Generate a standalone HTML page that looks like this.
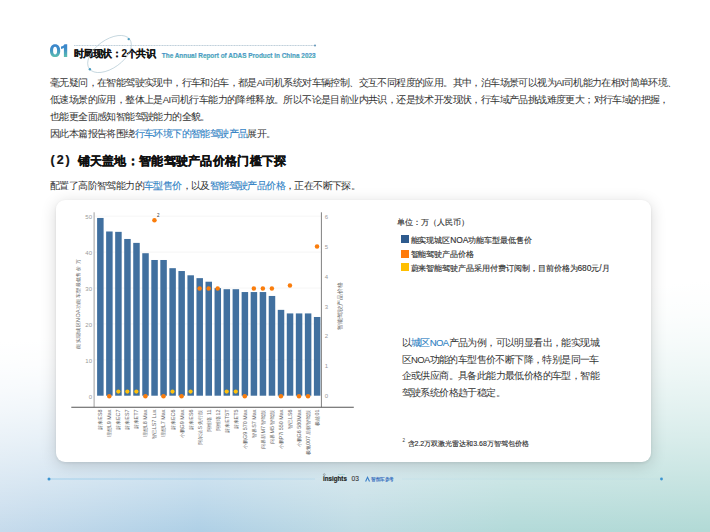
<!DOCTYPE html>
<html><head><meta charset="utf-8">
<style>
*{margin:0;padding:0;box-sizing:border-box}
html,body{width:710px;height:532px;overflow:hidden}
body{position:relative;font-family:"Liberation Sans",sans-serif;color:#333;
background:linear-gradient(to right,#c6dbec 0%,#afd0e6 28%,#bfdbe4 50%,#b3dad9 72%,#b2dad6 100%);}
.abs{position:absolute;white-space:nowrap}
.body{font-size:9.5px;letter-spacing:-0.6px;color:#333;line-height:17px}
.blue{color:#2f7fc4;-webkit-text-stroke-width:0.1px}
#card{position:absolute;left:56px;top:200px;width:595px;height:262px;background:#fff;border-radius:9px;
 box-shadow:0 1px 3px rgba(0,0,0,0.08),0 3px 16px rgba(0,0,0,0.16)}
</style></head><body>

<svg style="position:absolute;left:0;top:0" width="710" height="532"><defs><linearGradient id="w0" x1="0" y1="0" x2="0" y2="1"><stop stop-color="#fff" offset="0" stop-opacity="1"/><stop stop-color="#fff" offset="0.6412" stop-opacity="1.000"/><stop stop-color="#fff" offset="0.6858" stop-opacity="0.956"/><stop stop-color="#fff" offset="0.7305" stop-opacity="0.875"/><stop stop-color="#fff" offset="0.7751" stop-opacity="0.770"/><stop stop-color="#fff" offset="0.8197" stop-opacity="0.646"/><stop stop-color="#fff" offset="0.8643" stop-opacity="0.506"/><stop stop-color="#fff" offset="0.9089" stop-opacity="0.350"/><stop stop-color="#fff" offset="0.9535" stop-opacity="0.182"/><stop stop-color="#fff" offset="0.9981" stop-opacity="0.000"/></linearGradient><linearGradient id="w1" x1="0" y1="0" x2="0" y2="1"><stop stop-color="#fff" offset="0" stop-opacity="1"/><stop stop-color="#fff" offset="0.6380" stop-opacity="1.000"/><stop stop-color="#fff" offset="0.6830" stop-opacity="0.956"/><stop stop-color="#fff" offset="0.7280" stop-opacity="0.875"/><stop stop-color="#fff" offset="0.7730" stop-opacity="0.770"/><stop stop-color="#fff" offset="0.8181" stop-opacity="0.646"/><stop stop-color="#fff" offset="0.8631" stop-opacity="0.506"/><stop stop-color="#fff" offset="0.9081" stop-opacity="0.350"/><stop stop-color="#fff" offset="0.9531" stop-opacity="0.182"/><stop stop-color="#fff" offset="0.9981" stop-opacity="0.000"/></linearGradient><linearGradient id="w2" x1="0" y1="0" x2="0" y2="1"><stop stop-color="#fff" offset="0" stop-opacity="1"/><stop stop-color="#fff" offset="0.6348" stop-opacity="1.000"/><stop stop-color="#fff" offset="0.6802" stop-opacity="0.956"/><stop stop-color="#fff" offset="0.7256" stop-opacity="0.875"/><stop stop-color="#fff" offset="0.7710" stop-opacity="0.770"/><stop stop-color="#fff" offset="0.8164" stop-opacity="0.646"/><stop stop-color="#fff" offset="0.8619" stop-opacity="0.506"/><stop stop-color="#fff" offset="0.9073" stop-opacity="0.350"/><stop stop-color="#fff" offset="0.9527" stop-opacity="0.182"/><stop stop-color="#fff" offset="0.9981" stop-opacity="0.000"/></linearGradient><linearGradient id="w3" x1="0" y1="0" x2="0" y2="1"><stop stop-color="#fff" offset="0" stop-opacity="1"/><stop stop-color="#fff" offset="0.6315" stop-opacity="1.000"/><stop stop-color="#fff" offset="0.6774" stop-opacity="0.956"/><stop stop-color="#fff" offset="0.7232" stop-opacity="0.875"/><stop stop-color="#fff" offset="0.7690" stop-opacity="0.770"/><stop stop-color="#fff" offset="0.8148" stop-opacity="0.646"/><stop stop-color="#fff" offset="0.8606" stop-opacity="0.506"/><stop stop-color="#fff" offset="0.9065" stop-opacity="0.350"/><stop stop-color="#fff" offset="0.9523" stop-opacity="0.182"/><stop stop-color="#fff" offset="0.9981" stop-opacity="0.000"/></linearGradient><linearGradient id="w4" x1="0" y1="0" x2="0" y2="1"><stop stop-color="#fff" offset="0" stop-opacity="1"/><stop stop-color="#fff" offset="0.6283" stop-opacity="1.000"/><stop stop-color="#fff" offset="0.6745" stop-opacity="0.956"/><stop stop-color="#fff" offset="0.7207" stop-opacity="0.875"/><stop stop-color="#fff" offset="0.7670" stop-opacity="0.770"/><stop stop-color="#fff" offset="0.8132" stop-opacity="0.646"/><stop stop-color="#fff" offset="0.8594" stop-opacity="0.506"/><stop stop-color="#fff" offset="0.9057" stop-opacity="0.350"/><stop stop-color="#fff" offset="0.9519" stop-opacity="0.182"/><stop stop-color="#fff" offset="0.9981" stop-opacity="0.000"/></linearGradient><linearGradient id="w5" x1="0" y1="0" x2="0" y2="1"><stop stop-color="#fff" offset="0" stop-opacity="1"/><stop stop-color="#fff" offset="0.6251" stop-opacity="1.000"/><stop stop-color="#fff" offset="0.6717" stop-opacity="0.956"/><stop stop-color="#fff" offset="0.7183" stop-opacity="0.875"/><stop stop-color="#fff" offset="0.7650" stop-opacity="0.770"/><stop stop-color="#fff" offset="0.8116" stop-opacity="0.646"/><stop stop-color="#fff" offset="0.8582" stop-opacity="0.506"/><stop stop-color="#fff" offset="0.9049" stop-opacity="0.350"/><stop stop-color="#fff" offset="0.9515" stop-opacity="0.182"/><stop stop-color="#fff" offset="0.9981" stop-opacity="0.000"/></linearGradient><linearGradient id="w6" x1="0" y1="0" x2="0" y2="1"><stop stop-color="#fff" offset="0" stop-opacity="1"/><stop stop-color="#fff" offset="0.6218" stop-opacity="1.000"/><stop stop-color="#fff" offset="0.6689" stop-opacity="0.956"/><stop stop-color="#fff" offset="0.7159" stop-opacity="0.875"/><stop stop-color="#fff" offset="0.7629" stop-opacity="0.770"/><stop stop-color="#fff" offset="0.8100" stop-opacity="0.646"/><stop stop-color="#fff" offset="0.8570" stop-opacity="0.506"/><stop stop-color="#fff" offset="0.9040" stop-opacity="0.350"/><stop stop-color="#fff" offset="0.9511" stop-opacity="0.182"/><stop stop-color="#fff" offset="0.9981" stop-opacity="0.000"/></linearGradient><linearGradient id="w7" x1="0" y1="0" x2="0" y2="1"><stop stop-color="#fff" offset="0" stop-opacity="1"/><stop stop-color="#fff" offset="0.6186" stop-opacity="1.000"/><stop stop-color="#fff" offset="0.6660" stop-opacity="0.956"/><stop stop-color="#fff" offset="0.7135" stop-opacity="0.875"/><stop stop-color="#fff" offset="0.7609" stop-opacity="0.770"/><stop stop-color="#fff" offset="0.8083" stop-opacity="0.646"/><stop stop-color="#fff" offset="0.8558" stop-opacity="0.506"/><stop stop-color="#fff" offset="0.9032" stop-opacity="0.350"/><stop stop-color="#fff" offset="0.9507" stop-opacity="0.182"/><stop stop-color="#fff" offset="0.9981" stop-opacity="0.000"/></linearGradient><linearGradient id="w8" x1="0" y1="0" x2="0" y2="1"><stop stop-color="#fff" offset="0" stop-opacity="1"/><stop stop-color="#fff" offset="0.6153" stop-opacity="1.000"/><stop stop-color="#fff" offset="0.6632" stop-opacity="0.956"/><stop stop-color="#fff" offset="0.7110" stop-opacity="0.875"/><stop stop-color="#fff" offset="0.7589" stop-opacity="0.770"/><stop stop-color="#fff" offset="0.8067" stop-opacity="0.646"/><stop stop-color="#fff" offset="0.8546" stop-opacity="0.506"/><stop stop-color="#fff" offset="0.9024" stop-opacity="0.350"/><stop stop-color="#fff" offset="0.9503" stop-opacity="0.182"/><stop stop-color="#fff" offset="0.9981" stop-opacity="0.000"/></linearGradient><linearGradient id="w9" x1="0" y1="0" x2="0" y2="1"><stop stop-color="#fff" offset="0" stop-opacity="1"/><stop stop-color="#fff" offset="0.6121" stop-opacity="1.000"/><stop stop-color="#fff" offset="0.6604" stop-opacity="0.956"/><stop stop-color="#fff" offset="0.7086" stop-opacity="0.875"/><stop stop-color="#fff" offset="0.7569" stop-opacity="0.770"/><stop stop-color="#fff" offset="0.8051" stop-opacity="0.646"/><stop stop-color="#fff" offset="0.8534" stop-opacity="0.506"/><stop stop-color="#fff" offset="0.9016" stop-opacity="0.350"/><stop stop-color="#fff" offset="0.9499" stop-opacity="0.182"/><stop stop-color="#fff" offset="0.9981" stop-opacity="0.000"/></linearGradient><linearGradient id="w10" x1="0" y1="0" x2="0" y2="1"><stop stop-color="#fff" offset="0" stop-opacity="1"/><stop stop-color="#fff" offset="0.6089" stop-opacity="1.000"/><stop stop-color="#fff" offset="0.6575" stop-opacity="0.956"/><stop stop-color="#fff" offset="0.7062" stop-opacity="0.875"/><stop stop-color="#fff" offset="0.7548" stop-opacity="0.770"/><stop stop-color="#fff" offset="0.8035" stop-opacity="0.646"/><stop stop-color="#fff" offset="0.8521" stop-opacity="0.506"/><stop stop-color="#fff" offset="0.9008" stop-opacity="0.350"/><stop stop-color="#fff" offset="0.9495" stop-opacity="0.182"/><stop stop-color="#fff" offset="0.9981" stop-opacity="0.000"/></linearGradient><linearGradient id="w11" x1="0" y1="0" x2="0" y2="1"><stop stop-color="#fff" offset="0" stop-opacity="1"/><stop stop-color="#fff" offset="0.6056" stop-opacity="1.000"/><stop stop-color="#fff" offset="0.6547" stop-opacity="0.956"/><stop stop-color="#fff" offset="0.7038" stop-opacity="0.875"/><stop stop-color="#fff" offset="0.7528" stop-opacity="0.770"/><stop stop-color="#fff" offset="0.8019" stop-opacity="0.646"/><stop stop-color="#fff" offset="0.8509" stop-opacity="0.506"/><stop stop-color="#fff" offset="0.9000" stop-opacity="0.350"/><stop stop-color="#fff" offset="0.9491" stop-opacity="0.182"/><stop stop-color="#fff" offset="0.9981" stop-opacity="0.000"/></linearGradient><linearGradient id="w12" x1="0" y1="0" x2="0" y2="1"><stop stop-color="#fff" offset="0" stop-opacity="1"/><stop stop-color="#fff" offset="0.6024" stop-opacity="1.000"/><stop stop-color="#fff" offset="0.6519" stop-opacity="0.956"/><stop stop-color="#fff" offset="0.7013" stop-opacity="0.875"/><stop stop-color="#fff" offset="0.7508" stop-opacity="0.770"/><stop stop-color="#fff" offset="0.8003" stop-opacity="0.646"/><stop stop-color="#fff" offset="0.8497" stop-opacity="0.506"/><stop stop-color="#fff" offset="0.8992" stop-opacity="0.350"/><stop stop-color="#fff" offset="0.9487" stop-opacity="0.182"/><stop stop-color="#fff" offset="0.9981" stop-opacity="0.000"/></linearGradient><linearGradient id="w13" x1="0" y1="0" x2="0" y2="1"><stop stop-color="#fff" offset="0" stop-opacity="1"/><stop stop-color="#fff" offset="0.5992" stop-opacity="1.000"/><stop stop-color="#fff" offset="0.6490" stop-opacity="0.956"/><stop stop-color="#fff" offset="0.6989" stop-opacity="0.875"/><stop stop-color="#fff" offset="0.7488" stop-opacity="0.770"/><stop stop-color="#fff" offset="0.7986" stop-opacity="0.646"/><stop stop-color="#fff" offset="0.8485" stop-opacity="0.506"/><stop stop-color="#fff" offset="0.8984" stop-opacity="0.350"/><stop stop-color="#fff" offset="0.9482" stop-opacity="0.182"/><stop stop-color="#fff" offset="0.9981" stop-opacity="0.000"/></linearGradient><linearGradient id="w14" x1="0" y1="0" x2="0" y2="1"><stop stop-color="#fff" offset="0" stop-opacity="1"/><stop stop-color="#fff" offset="0.5959" stop-opacity="1.000"/><stop stop-color="#fff" offset="0.6462" stop-opacity="0.956"/><stop stop-color="#fff" offset="0.6965" stop-opacity="0.875"/><stop stop-color="#fff" offset="0.7467" stop-opacity="0.770"/><stop stop-color="#fff" offset="0.7970" stop-opacity="0.646"/><stop stop-color="#fff" offset="0.8473" stop-opacity="0.506"/><stop stop-color="#fff" offset="0.8976" stop-opacity="0.350"/><stop stop-color="#fff" offset="0.9478" stop-opacity="0.182"/><stop stop-color="#fff" offset="0.9981" stop-opacity="0.000"/></linearGradient><linearGradient id="w15" x1="0" y1="0" x2="0" y2="1"><stop stop-color="#fff" offset="0" stop-opacity="1"/><stop stop-color="#fff" offset="0.5927" stop-opacity="1.000"/><stop stop-color="#fff" offset="0.6434" stop-opacity="0.956"/><stop stop-color="#fff" offset="0.6940" stop-opacity="0.875"/><stop stop-color="#fff" offset="0.7447" stop-opacity="0.770"/><stop stop-color="#fff" offset="0.7954" stop-opacity="0.646"/><stop stop-color="#fff" offset="0.8461" stop-opacity="0.506"/><stop stop-color="#fff" offset="0.8968" stop-opacity="0.350"/><stop stop-color="#fff" offset="0.9474" stop-opacity="0.182"/><stop stop-color="#fff" offset="0.9981" stop-opacity="0.000"/></linearGradient><linearGradient id="w16" x1="0" y1="0" x2="0" y2="1"><stop stop-color="#fff" offset="0" stop-opacity="1"/><stop stop-color="#fff" offset="0.5894" stop-opacity="1.000"/><stop stop-color="#fff" offset="0.6405" stop-opacity="0.956"/><stop stop-color="#fff" offset="0.6916" stop-opacity="0.875"/><stop stop-color="#fff" offset="0.7427" stop-opacity="0.770"/><stop stop-color="#fff" offset="0.7938" stop-opacity="0.646"/><stop stop-color="#fff" offset="0.8449" stop-opacity="0.506"/><stop stop-color="#fff" offset="0.8960" stop-opacity="0.350"/><stop stop-color="#fff" offset="0.9470" stop-opacity="0.182"/><stop stop-color="#fff" offset="0.9981" stop-opacity="0.000"/></linearGradient><linearGradient id="w17" x1="0" y1="0" x2="0" y2="1"><stop stop-color="#fff" offset="0" stop-opacity="1"/><stop stop-color="#fff" offset="0.5862" stop-opacity="1.000"/><stop stop-color="#fff" offset="0.6377" stop-opacity="0.956"/><stop stop-color="#fff" offset="0.6892" stop-opacity="0.875"/><stop stop-color="#fff" offset="0.7407" stop-opacity="0.770"/><stop stop-color="#fff" offset="0.7922" stop-opacity="0.646"/><stop stop-color="#fff" offset="0.8437" stop-opacity="0.506"/><stop stop-color="#fff" offset="0.8951" stop-opacity="0.350"/><stop stop-color="#fff" offset="0.9466" stop-opacity="0.182"/><stop stop-color="#fff" offset="0.9981" stop-opacity="0.000"/></linearGradient><linearGradient id="w18" x1="0" y1="0" x2="0" y2="1"><stop stop-color="#fff" offset="0" stop-opacity="1"/><stop stop-color="#fff" offset="0.5830" stop-opacity="1.000"/><stop stop-color="#fff" offset="0.6349" stop-opacity="0.956"/><stop stop-color="#fff" offset="0.6868" stop-opacity="0.875"/><stop stop-color="#fff" offset="0.7387" stop-opacity="0.770"/><stop stop-color="#fff" offset="0.7905" stop-opacity="0.646"/><stop stop-color="#fff" offset="0.8424" stop-opacity="0.506"/><stop stop-color="#fff" offset="0.8943" stop-opacity="0.350"/><stop stop-color="#fff" offset="0.9462" stop-opacity="0.182"/><stop stop-color="#fff" offset="0.9981" stop-opacity="0.000"/></linearGradient><linearGradient id="w19" x1="0" y1="0" x2="0" y2="1"><stop stop-color="#fff" offset="0" stop-opacity="1"/><stop stop-color="#fff" offset="0.5797" stop-opacity="1.000"/><stop stop-color="#fff" offset="0.6320" stop-opacity="0.956"/><stop stop-color="#fff" offset="0.6843" stop-opacity="0.875"/><stop stop-color="#fff" offset="0.7366" stop-opacity="0.770"/><stop stop-color="#fff" offset="0.7889" stop-opacity="0.646"/><stop stop-color="#fff" offset="0.8412" stop-opacity="0.506"/><stop stop-color="#fff" offset="0.8935" stop-opacity="0.350"/><stop stop-color="#fff" offset="0.9458" stop-opacity="0.182"/><stop stop-color="#fff" offset="0.9981" stop-opacity="0.000"/></linearGradient><linearGradient id="w20" x1="0" y1="0" x2="0" y2="1"><stop stop-color="#fff" offset="0" stop-opacity="1"/><stop stop-color="#fff" offset="0.5765" stop-opacity="1.000"/><stop stop-color="#fff" offset="0.6292" stop-opacity="0.956"/><stop stop-color="#fff" offset="0.6819" stop-opacity="0.875"/><stop stop-color="#fff" offset="0.7346" stop-opacity="0.770"/><stop stop-color="#fff" offset="0.7873" stop-opacity="0.646"/><stop stop-color="#fff" offset="0.8400" stop-opacity="0.506"/><stop stop-color="#fff" offset="0.8927" stop-opacity="0.350"/><stop stop-color="#fff" offset="0.9454" stop-opacity="0.182"/><stop stop-color="#fff" offset="0.9981" stop-opacity="0.000"/></linearGradient><linearGradient id="w21" x1="0" y1="0" x2="0" y2="1"><stop stop-color="#fff" offset="0" stop-opacity="1"/><stop stop-color="#fff" offset="0.5733" stop-opacity="1.000"/><stop stop-color="#fff" offset="0.6264" stop-opacity="0.956"/><stop stop-color="#fff" offset="0.6795" stop-opacity="0.875"/><stop stop-color="#fff" offset="0.7326" stop-opacity="0.770"/><stop stop-color="#fff" offset="0.7857" stop-opacity="0.646"/><stop stop-color="#fff" offset="0.8388" stop-opacity="0.506"/><stop stop-color="#fff" offset="0.8919" stop-opacity="0.350"/><stop stop-color="#fff" offset="0.9450" stop-opacity="0.182"/><stop stop-color="#fff" offset="0.9981" stop-opacity="0.000"/></linearGradient><linearGradient id="w22" x1="0" y1="0" x2="0" y2="1"><stop stop-color="#fff" offset="0" stop-opacity="1"/><stop stop-color="#fff" offset="0.5700" stop-opacity="1.000"/><stop stop-color="#fff" offset="0.6235" stop-opacity="0.956"/><stop stop-color="#fff" offset="0.6770" stop-opacity="0.875"/><stop stop-color="#fff" offset="0.7306" stop-opacity="0.770"/><stop stop-color="#fff" offset="0.7841" stop-opacity="0.646"/><stop stop-color="#fff" offset="0.8376" stop-opacity="0.506"/><stop stop-color="#fff" offset="0.8911" stop-opacity="0.350"/><stop stop-color="#fff" offset="0.9446" stop-opacity="0.182"/><stop stop-color="#fff" offset="0.9981" stop-opacity="0.000"/></linearGradient><linearGradient id="w23" x1="0" y1="0" x2="0" y2="1"><stop stop-color="#fff" offset="0" stop-opacity="1"/><stop stop-color="#fff" offset="0.5668" stop-opacity="1.000"/><stop stop-color="#fff" offset="0.6207" stop-opacity="0.956"/><stop stop-color="#fff" offset="0.6746" stop-opacity="0.875"/><stop stop-color="#fff" offset="0.7285" stop-opacity="0.770"/><stop stop-color="#fff" offset="0.7825" stop-opacity="0.646"/><stop stop-color="#fff" offset="0.8364" stop-opacity="0.506"/><stop stop-color="#fff" offset="0.8903" stop-opacity="0.350"/><stop stop-color="#fff" offset="0.9442" stop-opacity="0.182"/><stop stop-color="#fff" offset="0.9981" stop-opacity="0.000"/></linearGradient><linearGradient id="w24" x1="0" y1="0" x2="0" y2="1"><stop stop-color="#fff" offset="0" stop-opacity="1"/><stop stop-color="#fff" offset="0.5635" stop-opacity="1.000"/><stop stop-color="#fff" offset="0.6179" stop-opacity="0.956"/><stop stop-color="#fff" offset="0.6722" stop-opacity="0.875"/><stop stop-color="#fff" offset="0.7265" stop-opacity="0.770"/><stop stop-color="#fff" offset="0.7808" stop-opacity="0.646"/><stop stop-color="#fff" offset="0.8352" stop-opacity="0.506"/><stop stop-color="#fff" offset="0.8895" stop-opacity="0.350"/><stop stop-color="#fff" offset="0.9438" stop-opacity="0.182"/><stop stop-color="#fff" offset="0.9981" stop-opacity="0.000"/></linearGradient><linearGradient id="w25" x1="0" y1="0" x2="0" y2="1"><stop stop-color="#fff" offset="0" stop-opacity="1"/><stop stop-color="#fff" offset="0.5603" stop-opacity="1.000"/><stop stop-color="#fff" offset="0.6150" stop-opacity="0.956"/><stop stop-color="#fff" offset="0.6698" stop-opacity="0.875"/><stop stop-color="#fff" offset="0.7245" stop-opacity="0.770"/><stop stop-color="#fff" offset="0.7792" stop-opacity="0.646"/><stop stop-color="#fff" offset="0.8339" stop-opacity="0.506"/><stop stop-color="#fff" offset="0.8887" stop-opacity="0.350"/><stop stop-color="#fff" offset="0.9434" stop-opacity="0.182"/><stop stop-color="#fff" offset="0.9981" stop-opacity="0.000"/></linearGradient><linearGradient id="w26" x1="0" y1="0" x2="0" y2="1"><stop stop-color="#fff" offset="0" stop-opacity="1"/><stop stop-color="#fff" offset="0.5571" stop-opacity="1.000"/><stop stop-color="#fff" offset="0.6122" stop-opacity="0.956"/><stop stop-color="#fff" offset="0.6673" stop-opacity="0.875"/><stop stop-color="#fff" offset="0.7225" stop-opacity="0.770"/><stop stop-color="#fff" offset="0.7776" stop-opacity="0.646"/><stop stop-color="#fff" offset="0.8327" stop-opacity="0.506"/><stop stop-color="#fff" offset="0.8879" stop-opacity="0.350"/><stop stop-color="#fff" offset="0.9430" stop-opacity="0.182"/><stop stop-color="#fff" offset="0.9981" stop-opacity="0.000"/></linearGradient><linearGradient id="w27" x1="0" y1="0" x2="0" y2="1"><stop stop-color="#fff" offset="0" stop-opacity="1"/><stop stop-color="#fff" offset="0.5538" stop-opacity="1.000"/><stop stop-color="#fff" offset="0.6094" stop-opacity="0.956"/><stop stop-color="#fff" offset="0.6649" stop-opacity="0.875"/><stop stop-color="#fff" offset="0.7204" stop-opacity="0.770"/><stop stop-color="#fff" offset="0.7760" stop-opacity="0.646"/><stop stop-color="#fff" offset="0.8315" stop-opacity="0.506"/><stop stop-color="#fff" offset="0.8870" stop-opacity="0.350"/><stop stop-color="#fff" offset="0.9426" stop-opacity="0.182"/><stop stop-color="#fff" offset="0.9981" stop-opacity="0.000"/></linearGradient><linearGradient id="w28" x1="0" y1="0" x2="0" y2="1"><stop stop-color="#fff" offset="0" stop-opacity="1"/><stop stop-color="#fff" offset="0.5506" stop-opacity="1.000"/><stop stop-color="#fff" offset="0.6065" stop-opacity="0.956"/><stop stop-color="#fff" offset="0.6625" stop-opacity="0.875"/><stop stop-color="#fff" offset="0.7184" stop-opacity="0.770"/><stop stop-color="#fff" offset="0.7744" stop-opacity="0.646"/><stop stop-color="#fff" offset="0.8303" stop-opacity="0.506"/><stop stop-color="#fff" offset="0.8862" stop-opacity="0.350"/><stop stop-color="#fff" offset="0.9422" stop-opacity="0.182"/><stop stop-color="#fff" offset="0.9981" stop-opacity="0.000"/></linearGradient><linearGradient id="w29" x1="0" y1="0" x2="0" y2="1"><stop stop-color="#fff" offset="0" stop-opacity="1"/><stop stop-color="#fff" offset="0.5474" stop-opacity="1.000"/><stop stop-color="#fff" offset="0.6037" stop-opacity="0.956"/><stop stop-color="#fff" offset="0.6600" stop-opacity="0.875"/><stop stop-color="#fff" offset="0.7164" stop-opacity="0.770"/><stop stop-color="#fff" offset="0.7727" stop-opacity="0.646"/><stop stop-color="#fff" offset="0.8291" stop-opacity="0.506"/><stop stop-color="#fff" offset="0.8854" stop-opacity="0.350"/><stop stop-color="#fff" offset="0.9418" stop-opacity="0.182"/><stop stop-color="#fff" offset="0.9981" stop-opacity="0.000"/></linearGradient><linearGradient id="w30" x1="0" y1="0" x2="0" y2="1"><stop stop-color="#fff" offset="0" stop-opacity="1"/><stop stop-color="#fff" offset="0.5441" stop-opacity="1.000"/><stop stop-color="#fff" offset="0.6009" stop-opacity="0.956"/><stop stop-color="#fff" offset="0.6576" stop-opacity="0.875"/><stop stop-color="#fff" offset="0.7144" stop-opacity="0.770"/><stop stop-color="#fff" offset="0.7711" stop-opacity="0.646"/><stop stop-color="#fff" offset="0.8279" stop-opacity="0.506"/><stop stop-color="#fff" offset="0.8846" stop-opacity="0.350"/><stop stop-color="#fff" offset="0.9414" stop-opacity="0.182"/><stop stop-color="#fff" offset="0.9981" stop-opacity="0.000"/></linearGradient><linearGradient id="w31" x1="0" y1="0" x2="0" y2="1"><stop stop-color="#fff" offset="0" stop-opacity="1"/><stop stop-color="#fff" offset="0.5409" stop-opacity="1.000"/><stop stop-color="#fff" offset="0.5980" stop-opacity="0.956"/><stop stop-color="#fff" offset="0.6552" stop-opacity="0.875"/><stop stop-color="#fff" offset="0.7123" stop-opacity="0.770"/><stop stop-color="#fff" offset="0.7695" stop-opacity="0.646"/><stop stop-color="#fff" offset="0.8267" stop-opacity="0.506"/><stop stop-color="#fff" offset="0.8838" stop-opacity="0.350"/><stop stop-color="#fff" offset="0.9410" stop-opacity="0.182"/><stop stop-color="#fff" offset="0.9981" stop-opacity="0.000"/></linearGradient><linearGradient id="w32" x1="0" y1="0" x2="0" y2="1"><stop stop-color="#fff" offset="0" stop-opacity="1"/><stop stop-color="#fff" offset="0.5376" stop-opacity="1.000"/><stop stop-color="#fff" offset="0.5952" stop-opacity="0.956"/><stop stop-color="#fff" offset="0.6528" stop-opacity="0.875"/><stop stop-color="#fff" offset="0.7103" stop-opacity="0.770"/><stop stop-color="#fff" offset="0.7679" stop-opacity="0.646"/><stop stop-color="#fff" offset="0.8254" stop-opacity="0.506"/><stop stop-color="#fff" offset="0.8830" stop-opacity="0.350"/><stop stop-color="#fff" offset="0.9406" stop-opacity="0.182"/><stop stop-color="#fff" offset="0.9981" stop-opacity="0.000"/></linearGradient><linearGradient id="w33" x1="0" y1="0" x2="0" y2="1"><stop stop-color="#fff" offset="0" stop-opacity="1"/><stop stop-color="#fff" offset="0.5344" stop-opacity="1.000"/><stop stop-color="#fff" offset="0.5924" stop-opacity="0.956"/><stop stop-color="#fff" offset="0.6503" stop-opacity="0.875"/><stop stop-color="#fff" offset="0.7083" stop-opacity="0.770"/><stop stop-color="#fff" offset="0.7663" stop-opacity="0.646"/><stop stop-color="#fff" offset="0.8242" stop-opacity="0.506"/><stop stop-color="#fff" offset="0.8822" stop-opacity="0.350"/><stop stop-color="#fff" offset="0.9402" stop-opacity="0.182"/><stop stop-color="#fff" offset="0.9981" stop-opacity="0.000"/></linearGradient><linearGradient id="w34" x1="0" y1="0" x2="0" y2="1"><stop stop-color="#fff" offset="0" stop-opacity="1"/><stop stop-color="#fff" offset="0.5312" stop-opacity="1.000"/><stop stop-color="#fff" offset="0.5895" stop-opacity="0.956"/><stop stop-color="#fff" offset="0.6479" stop-opacity="0.875"/><stop stop-color="#fff" offset="0.7063" stop-opacity="0.770"/><stop stop-color="#fff" offset="0.7646" stop-opacity="0.646"/><stop stop-color="#fff" offset="0.8230" stop-opacity="0.506"/><stop stop-color="#fff" offset="0.8814" stop-opacity="0.350"/><stop stop-color="#fff" offset="0.9398" stop-opacity="0.182"/><stop stop-color="#fff" offset="0.9981" stop-opacity="0.000"/></linearGradient><linearGradient id="w35" x1="0" y1="0" x2="0" y2="1"><stop stop-color="#fff" offset="0" stop-opacity="1"/><stop stop-color="#fff" offset="0.5279" stop-opacity="1.000"/><stop stop-color="#fff" offset="0.5867" stop-opacity="0.956"/><stop stop-color="#fff" offset="0.6455" stop-opacity="0.875"/><stop stop-color="#fff" offset="0.7043" stop-opacity="0.770"/><stop stop-color="#fff" offset="0.7630" stop-opacity="0.646"/><stop stop-color="#fff" offset="0.8218" stop-opacity="0.506"/><stop stop-color="#fff" offset="0.8806" stop-opacity="0.350"/><stop stop-color="#fff" offset="0.9393" stop-opacity="0.182"/><stop stop-color="#fff" offset="0.9981" stop-opacity="0.000"/></linearGradient></defs><rect x="0" y="0" width="20" height="532" fill="url(#w0)" shape-rendering="crispEdges"/><rect x="20" y="0" width="19" height="532" fill="url(#w1)" shape-rendering="crispEdges"/><rect x="39" y="0" width="20" height="532" fill="url(#w2)" shape-rendering="crispEdges"/><rect x="59" y="0" width="20" height="532" fill="url(#w3)" shape-rendering="crispEdges"/><rect x="79" y="0" width="20" height="532" fill="url(#w4)" shape-rendering="crispEdges"/><rect x="99" y="0" width="19" height="532" fill="url(#w5)" shape-rendering="crispEdges"/><rect x="118" y="0" width="20" height="532" fill="url(#w6)" shape-rendering="crispEdges"/><rect x="138" y="0" width="20" height="532" fill="url(#w7)" shape-rendering="crispEdges"/><rect x="158" y="0" width="20" height="532" fill="url(#w8)" shape-rendering="crispEdges"/><rect x="178" y="0" width="19" height="532" fill="url(#w9)" shape-rendering="crispEdges"/><rect x="197" y="0" width="20" height="532" fill="url(#w10)" shape-rendering="crispEdges"/><rect x="217" y="0" width="20" height="532" fill="url(#w11)" shape-rendering="crispEdges"/><rect x="237" y="0" width="19" height="532" fill="url(#w12)" shape-rendering="crispEdges"/><rect x="256" y="0" width="20" height="532" fill="url(#w13)" shape-rendering="crispEdges"/><rect x="276" y="0" width="20" height="532" fill="url(#w14)" shape-rendering="crispEdges"/><rect x="296" y="0" width="20" height="532" fill="url(#w15)" shape-rendering="crispEdges"/><rect x="316" y="0" width="19" height="532" fill="url(#w16)" shape-rendering="crispEdges"/><rect x="335" y="0" width="20" height="532" fill="url(#w17)" shape-rendering="crispEdges"/><rect x="355" y="0" width="20" height="532" fill="url(#w18)" shape-rendering="crispEdges"/><rect x="375" y="0" width="19" height="532" fill="url(#w19)" shape-rendering="crispEdges"/><rect x="394" y="0" width="20" height="532" fill="url(#w20)" shape-rendering="crispEdges"/><rect x="414" y="0" width="20" height="532" fill="url(#w21)" shape-rendering="crispEdges"/><rect x="434" y="0" width="20" height="532" fill="url(#w22)" shape-rendering="crispEdges"/><rect x="454" y="0" width="19" height="532" fill="url(#w23)" shape-rendering="crispEdges"/><rect x="473" y="0" width="20" height="532" fill="url(#w24)" shape-rendering="crispEdges"/><rect x="493" y="0" width="20" height="532" fill="url(#w25)" shape-rendering="crispEdges"/><rect x="513" y="0" width="19" height="532" fill="url(#w26)" shape-rendering="crispEdges"/><rect x="532" y="0" width="20" height="532" fill="url(#w27)" shape-rendering="crispEdges"/><rect x="552" y="0" width="20" height="532" fill="url(#w28)" shape-rendering="crispEdges"/><rect x="572" y="0" width="20" height="532" fill="url(#w29)" shape-rendering="crispEdges"/><rect x="592" y="0" width="19" height="532" fill="url(#w30)" shape-rendering="crispEdges"/><rect x="611" y="0" width="20" height="532" fill="url(#w31)" shape-rendering="crispEdges"/><rect x="631" y="0" width="20" height="532" fill="url(#w32)" shape-rendering="crispEdges"/><rect x="651" y="0" width="20" height="532" fill="url(#w33)" shape-rendering="crispEdges"/><rect x="671" y="0" width="19" height="532" fill="url(#w34)" shape-rendering="crispEdges"/><rect x="690" y="0" width="20" height="532" fill="url(#w35)" shape-rendering="crispEdges"/></svg>
<!-- header -->
<svg class="abs" style="left:0;top:0" width="330" height="70">
 <defs>
  <linearGradient id="g01" x1="0" y1="44" x2="0" y2="57.5" gradientUnits="userSpaceOnUse"><stop offset="0" stop-color="#3a84cc"/><stop offset="0.35" stop-color="#3d8cc8"/><stop offset="1" stop-color="#5ec2ae"/></linearGradient>
  <linearGradient id="gtt" x1="0" y1="52.5" x2="0" y2="57.8" gradientUnits="userSpaceOnUse"><stop offset="0" stop-color="#3a86c8"/><stop offset="1" stop-color="#58b4b8"/></linearGradient>
 </defs>
 <path fill-rule="evenodd" fill="url(#g01)" d="M55.1 44.2 C58.3 44.2 60.2 46.7 60.2 50.65 C60.2 54.6 58.3 57.1 55.1 57.1 C51.9 57.1 50 54.6 50 50.65 C50 46.7 51.9 44.2 55.1 44.2 Z M55.1 46.8 C53.8 46.8 53.1 48.2 53.1 50.65 C53.1 53.1 53.8 54.5 55.1 54.5 C56.4 54.5 57.1 53.1 57.1 50.65 C57.1 48.2 56.4 46.8 55.1 46.8 Z"/>
 <path fill="url(#g01)" d="M63.9 57.1 L67.2 57.1 L67.2 44.2 L64.5 44.2 C64 45.4 62.8 46.2 61 46.4 L61 48.9 C62.3 48.8 63.3 48.3 63.9 47.7 Z"/>
 <text x="161.8" y="57.6" font-family="Liberation Sans" font-weight="bold" font-size="6.7" textLength="153.8" lengthAdjust="spacingAndGlyphs" fill="url(#gtt)" stroke="url(#gtt)" stroke-width="0.2">The Annual Report of ADAS Product in China 2023</text>
</svg>
<div class="abs" style="left:73.5px;top:48px;font-size:10px;font-weight:bold;color:#111;line-height:12px;letter-spacing:-0.4px;-webkit-text-stroke:0.15px #111">时局现状：2个共识</div>

<svg class="abs" style="left:0;top:0" width="710" height="100">
 <line x1="74" y1="45.5" x2="315" y2="45.5" stroke="#a5bccb" stroke-width="0.7" stroke-dasharray="1.2 0.4"/>
 <circle cx="315" cy="45.5" r="1.1" fill="#6d9dbd"/>
 <ellipse cx="109.5" cy="54" rx="25" ry="14" transform="rotate(-36 109.5 54)" fill="none" stroke="#a9c3cf" stroke-width="0.6"/>
 <circle cx="128.7" cy="39.1" r="1.2" fill="#4a9cc0"/>
 <circle cx="89.9" cy="69.2" r="1.2" fill="#4a9cc0"/>
</svg>

<!-- intro paragraph -->
<div class="abs body" style="left:50px;top:74px">毫无疑问，在智能驾驶实现中，行车和泊车，都是AI司机系统对车辆控制、交互不同程度的应用。其中，泊车场景可以视为AI司机能力在相对简单环境、<br>低速场景的应用，整体上是AI司机行车能力的降维释放。所以不论是目前业内共识，还是技术开发现状，行车域产品挑战难度更大；对行车域的把握，<br>也能更全面感知智能驾驶能力的全貌。<br>因此本篇报告将围绕<span class="blue">行车环境下的智能驾驶产品</span>展开。</div>

<!-- section heading -->
<div class="abs" style="left:50.5px;top:152px;font-size:12.5px;font-weight:bold;color:#111;line-height:16px;letter-spacing:2px;-webkit-text-stroke:0.2px #111">(2)</div>
<div class="abs" style="left:77.5px;top:153px;font-size:12px;font-weight:bold;color:#111;line-height:16px;letter-spacing:0.3px;-webkit-text-stroke:0.3px #111">铺天盖地：智能驾驶产品价格门槛下探</div>
<div class="abs body" style="left:50px;top:177px">配置了高阶智驾能力的<span class="blue">车型售价</span>，以及<span class="blue">智能驾驶产品价格</span>，正在不断下探。</div>

<div id="card"></div>
<svg class="abs" style="left:0;top:0" width="710" height="532">
<style>
.tk{font-family:"Liberation Sans",sans-serif;font-size:6px;fill:#9a9a9a}
.xl{font-family:"Liberation Sans",sans-serif;font-size:5.4px;fill:#666}
.at{font-family:"Liberation Sans",sans-serif;font-size:6px;fill:#666}.at2{font-family:"Liberation Sans",sans-serif;font-size:5.4px;letter-spacing:0.4px;fill:#666}
.sup{font-family:"Liberation Sans",sans-serif;font-size:4.5px;fill:#333}
</style>
<line x1="95" x2="321" y1="359.80" y2="359.80" stroke="#f4f4f4" stroke-width="0.8"/>
<line x1="95" x2="321" y1="323.90" y2="323.90" stroke="#f4f4f4" stroke-width="0.8"/>
<line x1="95" x2="321" y1="288.00" y2="288.00" stroke="#f4f4f4" stroke-width="0.8"/>
<line x1="95" x2="321" y1="252.10" y2="252.10" stroke="#f4f4f4" stroke-width="0.8"/>
<line x1="95" x2="321" y1="216.20" y2="216.20" stroke="#f4f4f4" stroke-width="0.8"/>
<rect x="97.10" y="217.96" width="6.5" height="177.74" fill="#41709f"/>
<rect x="106.13" y="231.49" width="6.5" height="164.21" fill="#41709f"/>
<rect x="115.17" y="231.85" width="6.5" height="163.85" fill="#41709f"/>
<rect x="124.20" y="238.97" width="6.5" height="156.73" fill="#41709f"/>
<rect x="133.23" y="242.89" width="6.5" height="152.81" fill="#41709f"/>
<rect x="142.26" y="253.22" width="6.5" height="142.48" fill="#41709f"/>
<rect x="151.30" y="259.99" width="6.5" height="135.71" fill="#41709f"/>
<rect x="160.33" y="259.99" width="6.5" height="135.71" fill="#41709f"/>
<rect x="169.36" y="268.18" width="6.5" height="127.52" fill="#41709f"/>
<rect x="178.40" y="271.03" width="6.5" height="124.67" fill="#41709f"/>
<rect x="187.43" y="275.30" width="6.5" height="120.40" fill="#41709f"/>
<rect x="196.46" y="278.15" width="6.5" height="117.55" fill="#41709f"/>
<rect x="205.50" y="281.72" width="6.5" height="113.98" fill="#41709f"/>
<rect x="214.53" y="288.13" width="6.5" height="107.57" fill="#41709f"/>
<rect x="223.56" y="289.20" width="6.5" height="106.50" fill="#41709f"/>
<rect x="232.59" y="289.20" width="6.5" height="106.50" fill="#41709f"/>
<rect x="241.63" y="292.05" width="6.5" height="103.65" fill="#41709f"/>
<rect x="250.66" y="292.05" width="6.5" height="103.65" fill="#41709f"/>
<rect x="259.69" y="292.05" width="6.5" height="103.65" fill="#41709f"/>
<rect x="268.73" y="295.96" width="6.5" height="99.74" fill="#41709f"/>
<rect x="277.76" y="309.86" width="6.5" height="85.84" fill="#41709f"/>
<rect x="286.79" y="313.42" width="6.5" height="82.28" fill="#41709f"/>
<rect x="295.83" y="313.42" width="6.5" height="82.28" fill="#41709f"/>
<rect x="304.86" y="313.42" width="6.5" height="82.28" fill="#41709f"/>
<rect x="313.89" y="316.98" width="6.5" height="78.72" fill="#41709f"/>
<line x1="94.1" x2="94.1" y1="212.3" y2="407.2" stroke="#a0a0a0" stroke-width="1"/>
<line x1="321.4" x2="321.4" y1="212.3" y2="407.2" stroke="#808080" stroke-width="1"/>
<line x1="71.3" x2="353.8" y1="407.2" y2="407.2" stroke="#555" stroke-width="1.1"/>
<circle cx="109.28" cy="396.20" r="2.25" fill="#fa7d0c"/>
<circle cx="145.41" cy="396.20" r="2.25" fill="#fa7d0c"/>
<circle cx="154.45" cy="220.19" r="2.25" fill="#fa7d0c"/>
<circle cx="163.48" cy="396.20" r="2.25" fill="#fa7d0c"/>
<circle cx="181.55" cy="396.20" r="2.25" fill="#fa7d0c"/>
<circle cx="199.61" cy="288.44" r="2.25" fill="#fa7d0c"/>
<circle cx="208.65" cy="288.44" r="2.25" fill="#fa7d0c"/>
<circle cx="217.68" cy="288.44" r="2.25" fill="#fa7d0c"/>
<circle cx="244.78" cy="396.20" r="2.25" fill="#fa7d0c"/>
<circle cx="253.81" cy="288.44" r="2.25" fill="#fa7d0c"/>
<circle cx="262.84" cy="288.44" r="2.25" fill="#fa7d0c"/>
<circle cx="271.88" cy="288.44" r="2.25" fill="#fa7d0c"/>
<circle cx="280.91" cy="396.20" r="2.25" fill="#fa7d0c"/>
<circle cx="289.94" cy="285.45" r="2.25" fill="#fa7d0c"/>
<circle cx="298.98" cy="396.20" r="2.25" fill="#fa7d0c"/>
<circle cx="308.01" cy="396.20" r="2.25" fill="#fa7d0c"/>
<circle cx="317.04" cy="246.53" r="2.25" fill="#fa7d0c"/>
<circle cx="118.32" cy="391.6" r="2.1" fill="#ffc10c"/>
<circle cx="127.35" cy="391.6" r="2.1" fill="#ffc10c"/>
<circle cx="136.38" cy="391.6" r="2.1" fill="#ffc10c"/>
<circle cx="172.51" cy="391.6" r="2.1" fill="#ffc10c"/>
<circle cx="190.58" cy="391.6" r="2.1" fill="#ffc10c"/>
<circle cx="226.71" cy="391.6" r="2.1" fill="#ffc10c"/>
<circle cx="235.75" cy="391.6" r="2.1" fill="#ffc10c"/>
<text x="92" y="398.70" text-anchor="end" class="tk">0</text>
<text x="92" y="362.80" text-anchor="end" class="tk">10</text>
<text x="92" y="326.90" text-anchor="end" class="tk">20</text>
<text x="92" y="291.00" text-anchor="end" class="tk">30</text>
<text x="92" y="255.10" text-anchor="end" class="tk">40</text>
<text x="92" y="219.20" text-anchor="end" class="tk">50</text>
<text x="324.8" y="398.30" class="tk">0</text>
<text x="324.8" y="368.37" class="tk">1</text>
<text x="324.8" y="338.43" class="tk">2</text>
<text x="324.8" y="308.50" class="tk">3</text>
<text x="324.8" y="278.57" class="tk">4</text>
<text x="324.8" y="248.63" class="tk">5</text>
<text x="324.8" y="218.70" class="tk">6</text>
<text transform="translate(102.25,409.5) rotate(-90)" text-anchor="end" class="xl">蔚来ES8</text>
<text transform="translate(111.28,409.5) rotate(-90)" text-anchor="end" class="xl">理想L9 Max</text>
<text transform="translate(120.32,409.5) rotate(-90)" text-anchor="end" class="xl">蔚来EC7</text>
<text transform="translate(129.35,409.5) rotate(-90)" text-anchor="end" class="xl">蔚来ES7</text>
<text transform="translate(138.38,409.5) rotate(-90)" text-anchor="end" class="xl">蔚来ET7</text>
<text transform="translate(147.41,409.5) rotate(-90)" text-anchor="end" class="xl">理想L8 Max</text>
<text transform="translate(156.45,409.5) rotate(-90)" text-anchor="end" class="xl">智己LS7 Lux</text>
<text transform="translate(165.48,409.5) rotate(-90)" text-anchor="end" class="xl">理想L7 Max</text>
<text transform="translate(174.51,409.5) rotate(-90)" text-anchor="end" class="xl">蔚来EC6</text>
<text transform="translate(183.55,409.5) rotate(-90)" text-anchor="end" class="xl">小鹏G9 Max</text>
<text transform="translate(192.58,409.5) rotate(-90)" text-anchor="end" class="xl">蔚来ES6</text>
<text transform="translate(201.61,409.5) rotate(-90)" text-anchor="end" class="xl">阿尔法S 先行版</text>
<text transform="translate(210.65,409.5) rotate(-90)" text-anchor="end" class="xl">阿维塔 11</text>
<text transform="translate(219.68,409.5) rotate(-90)" text-anchor="end" class="xl">阿维塔12</text>
<text transform="translate(228.71,409.5) rotate(-90)" text-anchor="end" class="xl">蔚来ET5T</text>
<text transform="translate(237.75,409.5) rotate(-90)" text-anchor="end" class="xl">蔚来ET5</text>
<text transform="translate(246.78,409.5) rotate(-90)" text-anchor="end" class="xl">小鹏G9 570 Max</text>
<text transform="translate(255.81,409.5) rotate(-90)" text-anchor="end" class="xl">智界S7 Max</text>
<text transform="translate(264.84,409.5) rotate(-90)" text-anchor="end" class="xl">问界新M7 智驾版</text>
<text transform="translate(273.88,409.5) rotate(-90)" text-anchor="end" class="xl">问界M5 智驾版</text>
<text transform="translate(282.91,409.5) rotate(-90)" text-anchor="end" class="xl">小鹏P7i 550 Max</text>
<text transform="translate(291.94,409.5) rotate(-90)" text-anchor="end" class="xl">智己LS6</text>
<text transform="translate(300.98,409.5) rotate(-90)" text-anchor="end" class="xl">小鹏G6 580Max</text>
<text transform="translate(310.01,409.5) rotate(-90)" text-anchor="end" class="xl">极氪007 后驱智驾版</text>
<text transform="translate(319.04,409.5) rotate(-90)" text-anchor="end" class="xl">极越01</text>
<text x="157.05" y="216.5" class="sup">2</text>
<text transform="translate(79.5,303.7) rotate(-90)" text-anchor="middle" class="at2">能实现城区NOA功能车型最低售价 万</text>
<text transform="translate(341.6,305.8) rotate(-90)" text-anchor="middle" class="at">智能驾驶产品价格</text>

</svg>
<div class="abs" style="left:397px;top:217px;font-size:8px;line-height:12px;color:#333;-webkit-text-stroke-width:0.15px">单位：万（人民币）</div>
<div class="abs" style="left:400.7px;top:235.3px;width:8px;height:8px;background:#2e5b8e"></div>
<div class="abs" style="left:400.7px;top:249.7px;width:8px;height:8px;background:#ff7a0a"></div>
<div class="abs" style="left:400.7px;top:263.4px;width:8px;height:8px;background:#ffbf00"></div>
<div class="abs" style="left:410.5px;top:233.5px;font-size:8.4px;letter-spacing:-0.05px;line-height:12px;color:#333;-webkit-text-stroke-width:0.15px">能实现城区NOA功能车型最低售价</div>
<div class="abs" style="left:410.5px;top:248px;font-size:8.4px;letter-spacing:-0.05px;line-height:12px;color:#333;-webkit-text-stroke-width:0.15px">智能驾驶产品价格</div>
<div class="abs" style="left:410.5px;top:262px;font-size:8.4px;letter-spacing:-0.05px;line-height:12px;color:#333;-webkit-text-stroke-width:0.15px">蔚来智能驾驶产品采用付费订阅制，目前价格为680元/月</div>
<div class="abs body" style="left:401.5px;top:334.8px;line-height:16.7px">以<span class="blue">城区NOA</span>产品为例，可以明显看出，能实现城<br>区NOA功能的车型售价不断下降，特别是同一车<br>企或供应商。具备此能力最低价格的车型，智能<br>驾驶系统价格趋于稳定。</div>
<div class="abs" style="left:402.5px;top:438px;font-size:4.5px;line-height:6px;color:#333">2</div>
<div class="abs" style="left:407.5px;top:438.5px;font-size:7px;line-height:10px;color:#333;-webkit-text-stroke-width:0.15px">含2.2万双激光雷达和3.68万智驾包价格</div>



<!-- footer -->
<svg class="abs" style="left:0;top:460px" width="710" height="40">
 <defs>
  <linearGradient id="fl" x1="49" x2="315" y1="0" y2="0" gradientUnits="userSpaceOnUse"><stop offset="0" stop-color="#7fc0e6" stop-opacity="0.6"/><stop offset="1" stop-color="#8cc6e8" stop-opacity="0.3"/></linearGradient>
  <linearGradient id="fr" x1="402" x2="661" y1="0" y2="0" gradientUnits="userSpaceOnUse"><stop offset="0" stop-color="#8cc6e8" stop-opacity="0.15"/><stop offset="1" stop-color="#8cc6e8" stop-opacity="0.1"/></linearGradient>
 </defs>
 <rect x="49" y="18.5" width="266" height="1" fill="url(#fl)"/>
 <rect x="402" y="18.5" width="259" height="1" fill="url(#fr)"/>
 <circle cx="49" cy="19" r="1.5" fill="#3b94d0"/>
 <circle cx="661.5" cy="19" r="1.4" fill="#3b94d0"/>
 <circle cx="324.3" cy="14.6" r="0.9" fill="none" stroke="#555" stroke-width="0.4"/>
 <rect x="338" y="14.3" width="7" height="0.5" fill="#4ab0a8" opacity="0.6"/>
</svg>
<div class="abs" style="left:322.8px;top:474px;font-size:7.8px;line-height:10px;font-weight:bold;color:#222;transform:scaleX(0.8);transform-origin:0 0;-webkit-text-stroke:0.2px #222">insights</div>
<div class="abs" style="left:351.6px;top:474.6px;font-size:6.6px;line-height:8px;color:#333;-webkit-text-stroke-width:0.1px">03</div>
<svg class="abs" style="left:364.8px;top:475.8px" width="6" height="6"><path d="M0 5.5 L2.5 0 L5.2 5.5 L3.9 5.5 L2.5 2.6 L1.3 5.5Z" fill="#3a7fc8"/></svg>
<div class="abs" style="left:371px;top:475.5px;font-size:5px;line-height:7px;color:#3a72c0;font-weight:bold;transform:scaleX(0.92);transform-origin:0 0">智能车参考</div>
</body></html>
